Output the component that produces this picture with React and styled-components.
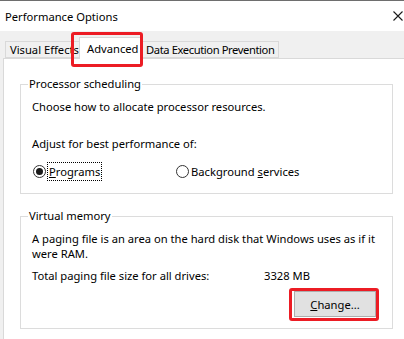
import styled, { createGlobalStyle } from "styled-components"

const GlobalStyle = createGlobalStyle`
    html, body {
        margin: 0;
        padding: 0;
        background: #f0f0f0;
    }
    body {
        font-family: "Segoe UI", "Noto Sans", sans-serif;
        font-size: 11.2px;
        color: #000;
    }
`

function CloseIcon() {
    return (
        <svg width="10" height="10" viewBox="0 0 10 10">
            <path d="M0.5 0.5 L9.5 9.5 M9.5 0.5 L0.5 9.5" stroke="#1a1a1a" strokeWidth="1.1" fill="none" />
        </svg>
    )
}

function Radio({ checked }) {
    return (
        <RadioCircle>
            {checked ? <RadioDot /> : null}
        </RadioCircle>
    )
}

function App() {
    return (
        <>
            <GlobalStyle />
            <Window>
                <TitleBar>
                    <Title>Performance Options</Title>
                    <CloseIcon />
                </TitleBar>
                <Body>
                    <TabStrip>
                        <Tab $width={76}>Visual Effects</Tab>
                        <Tab $active $width={62}>
                            Advanced
                            <Highlight $left={-9} $top={-6} $width={72} $height={35} />
                        </Tab>
                        <Tab $tight>Data Execution Prevention</Tab>
                    </TabStrip>
                    <Panel>
                        <GroupBox>
                            <Legend>Processor scheduling</Legend>
                            <Line>Choose how to allocate processor resources.</Line>
                            <Line $gap={21}>Adjust for best performance of:</Line>
                            <RadioRow>
                                <RadioOption>
                                    <Radio checked />
                                    <FocusLabel><u>P</u>rograms</FocusLabel>
                                </RadioOption>
                                <RadioOption>
                                    <Radio />
                                    <span>Background <u>s</u>ervices</span>
                                </RadioOption>
                            </RadioRow>
                        </GroupBox>
                        <GroupBox $second>
                            <Legend>Virtual memory</Legend>
                            <Paragraph>A paging file is an area on the hard disk that Windows uses as if it were RAM.</Paragraph>
                            <SizeRow>
                                <span>Total paging file size for all drives:</span>
                                <span>3328 MB</span>
                            </SizeRow>
                            <ButtonRow>
                                <ButtonWrap>
                                    <Button><u>C</u>hange...</Button>
                                    <Highlight $left={-5} $top={-3} $width={90} $height={33} />
                                </ButtonWrap>
                            </ButtonRow>
                        </GroupBox>
                    </Panel>
                </Body>
            </Window>
        </>
    )
}

const Window = styled.div`
    width: 404px;
    height: 339px;
    overflow: hidden;
    background: #f0f0f0;
    display: flex;
    flex-direction: column;
`

const TitleBar = styled.div`
    height: 30px;
    flex: none;
    background: #fff;
    border-top: 1px solid #6e6e6e;
    display: flex;
    align-items: center;
    justify-content: space-between;
    padding: 0 1px 0 5px;
`

const Title = styled.div`
    font-size: 11.2px;
    margin-top: 1px;
`

const Body = styled.div`
    flex: 1;
    padding: 6px 0 0 3px;
    display: flex;
    flex-direction: column;
`

const TabStrip = styled.div`
    position: relative;
    display: flex;
    align-items: flex-end;
    height: 21px;
    padding-left: 2px;
    z-index: 1;
`

const Tab = styled.div`
    box-sizing: border-box;
    width: ${p => p.$width ? `${p.$width}px` : "auto"};
    height: ${p => p.$active ? "22px" : "17px"};
    margin-bottom: ${p => p.$active ? "-1px" : "0"};
    margin-left: ${p => p.$active ? "-2px" : "0"};
    padding: ${p => p.$active ? "0 0 1px 7px" : "0 4px 0 4px"};
    letter-spacing: ${p => p.$tight ? "-0.4px" : "normal"};
    background: ${p => p.$active ? "#fff" : "#f0f0f0"};
    border: 1px solid #d9d9d9;
    border-bottom: ${p => p.$active ? "none" : "1px solid #d9d9d9"};
    display: flex;
    align-items: center;
    white-space: nowrap;
    overflow: ${p => p.$active ? "visible" : "hidden"};
    position: relative;
    z-index: ${p => p.$active ? 2 : 1};
`

const Highlight = styled.div`
    position: absolute;
    left: ${p => p.$left}px;
    top: ${p => p.$top}px;
    width: ${p => p.$width}px;
    height: ${p => p.$height}px;
    box-sizing: border-box;
    border: 3px solid #ec1c24;
    border-radius: 3px;
    z-index: 5;
    pointer-events: none;
`

const Panel = styled.div`
    flex: 1;
    background: #fff;
    border: 1px solid #d9d9d9;
    border-right: none;
    border-bottom: none;
    padding: 17px 11px 0 16px;
    display: flex;
    flex-direction: column;
    gap: 14px;
`

const GroupBox = styled.fieldset`
    margin: 0;
    border: 1px solid #dcdcdc;
    padding: 7px 11px ${p => p.$second ? "11px" : "13px"} 11px;
    min-width: 0;
`

const Legend = styled.legend`
    padding: 0 1px;
    margin-left: -4px;
    line-height: 16px;
`

const Line = styled.div`
    line-height: 16px;
    margin-top: ${p => p.$gap || 0}px;
`

const RadioRow = styled.div`
    display: flex;
    align-items: center;
    margin-top: 10px;
    height: 18px;
`

const RadioOption = styled.label`
    display: flex;
    align-items: center;
    gap: 2px;
    width: 142px;
    margin-left: 1px;
`

const RadioCircle = styled.span`
    box-sizing: border-box;
    width: 13px;
    height: 13px;
    border: 1px solid #333;
    border-radius: 50%;
    display: flex;
    align-items: center;
    justify-content: center;
    background: #fff;
    flex: none;
`

const RadioDot = styled.span`
    width: 7px;
    height: 7px;
    border-radius: 50%;
    background: #1a1a1a;
`

const FocusLabel = styled.span`
    outline: 1px dotted #000;
    outline-offset: 0;
    padding: 0 1px;
    line-height: 17px;
`

const Paragraph = styled.div`
    line-height: 15px;
    margin-top: 0;
`

const SizeRow = styled.div`
    display: grid;
    grid-template-columns: 232px auto;
    line-height: 16px;
    margin-top: 7px;
`

const ButtonRow = styled.div`
    display: flex;
    justify-content: flex-end;
    margin-top: 7px;
    padding-right: 5px;
`

const ButtonWrap = styled.div`
    position: relative;
`

const Button = styled.button`
    font-family: inherit;
    font-size: 11.2px;
    color: #000;
    width: 82px;
    height: 26px;
    background: #e1e1e1;
    border: 1px solid #adadad;
    border-radius: 0;
    padding: 0;
`

export default App
